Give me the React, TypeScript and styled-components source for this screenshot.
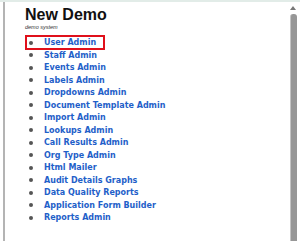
import React from "react";
import styled, { createGlobalStyle } from "styled-components";

const Global = createGlobalStyle`
  html, body { margin: 0; padding: 0; background: #fff; }
  body { width: 300px; height: 241px; overflow: hidden; }
`;

const Frame = styled.div`
  width: 300px;
  height: 241px;
  box-sizing: border-box;
  display: flex;
  border-top: 2px solid #e2ece8;
  padding-left: 3px;
  background: #fff;
`;

const Panel = styled.div`
  flex: 1;
  border-left: 2px solid #b4b4b4;
  padding: 3px 0 0 20px;
`;

const Title = styled.h1`
  margin: 0;
  font-family: "Liberation Sans", Arial, sans-serif;
  font-weight: bold;
  font-size: 16px;
  line-height: 19px;
  color: #111;
`;

const Sub = styled.div`
  font-family: "Liberation Sans", Arial, sans-serif;
  font-style: italic;
  font-size: 5.5px;
  line-height: 7px;
  color: #333;
`;

const List = styled.ul`
  list-style: none;
  margin: 4px 0 0 0;
  padding: 0;
`;

const Item = styled.li`
  display: flex;
  align-items: center;
  height: 12.5px;
  font-family: "DejaVu Sans", Verdana, sans-serif;
  font-weight: bold;
  font-size: 8px;
  color: #1f5fc9;
  &::before {
    content: "";
    width: 4px;
    height: 4px;
    border-radius: 50%;
    background: #555;
    margin: 0 11px 0 4px;
  }
`;

const Boxed = styled(Item)`
  width: 80px;
  height: 15px;
  margin-bottom: -1px;
  box-sizing: border-box;
  border: 2px solid #e0101b;
  &::before {
    margin: 0 11px 0 2px;
  }
`;

const Scroll = styled.div`
  width: 12px;
  display: flex;
  flex-direction: column;
  align-items: center;
  padding-top: 4px;
  margin-right: 1px;
`;

const Arrow = styled.div`
  width: 0;
  height: 0;
  border-left: 3px solid transparent;
  border-right: 3px solid transparent;
  border-bottom: 4px solid #777;
`;

const Thumb = styled.div`
  flex: 1;
  width: 6px;
  margin-top: 4px;
  background: #979797;
  border-left: 1px solid #c4c4c4;
  border-radius: 3px 3px 0 0;
`;

const items = [
  "User Admin",
  "Staff Admin",
  "Events Admin",
  "Labels Admin",
  "Dropdowns Admin",
  "Document Template Admin",
  "Import Admin",
  "Lookups Admin",
  "Call Results Admin",
  "Org Type Admin",
  "Html Mailer",
  "Audit Details Graphs",
  "Data Quality Reports",
  "Application Form Builder",
  "Reports Admin",
];

export default function App() {
  return (
    <>
      <Global />
      <Frame>
        <Panel>
          <Title>New Demo</Title>
          <Sub>demo system</Sub>
          <List>
            {items.map((t, i) =>
              i === 0 ? <Boxed key={t}>{t}</Boxed> : <Item key={t}>{t}</Item>
            )}
          </List>
        </Panel>
        <Scroll>
          <Arrow />
          <Thumb />
        </Scroll>
      </Frame>
    </>
  );
}
